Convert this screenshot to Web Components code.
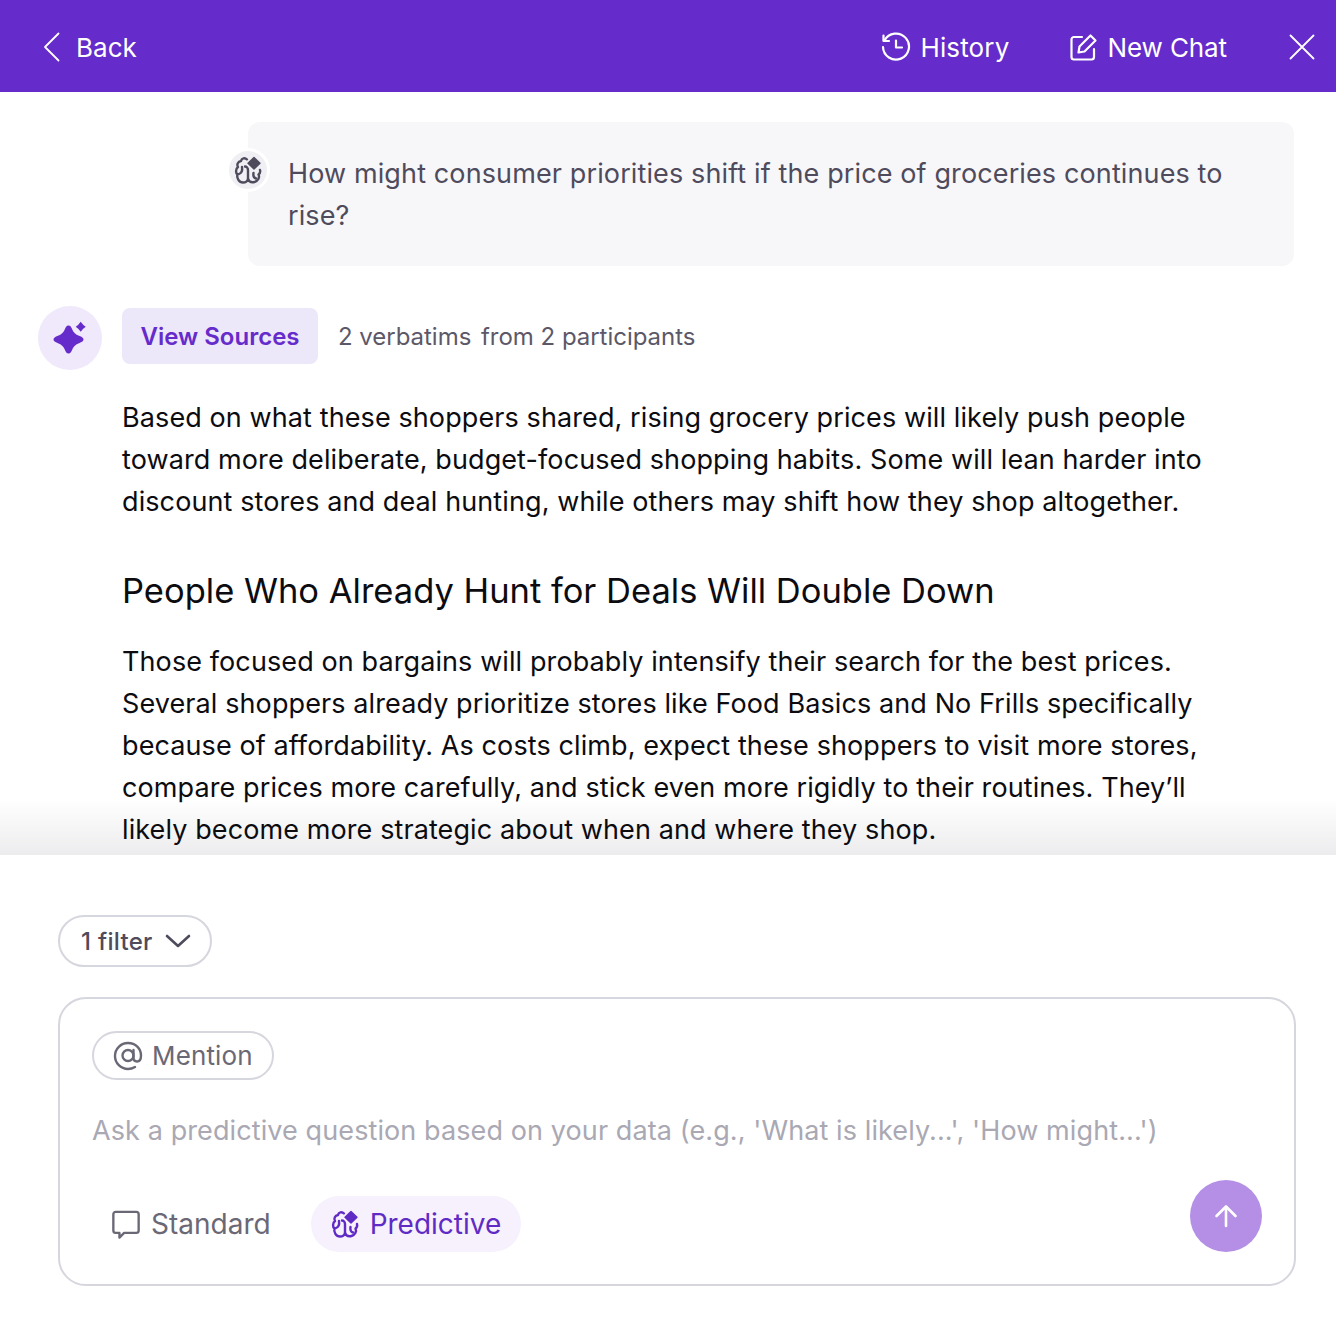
<!DOCTYPE html>
<html>
<head>
<meta charset="utf-8">
<title>Chat</title>
<style>
    html, body { margin: 0; padding: 0; background: #fff; }
    body { font-family: Inter, "Liberation Sans", sans-serif; }
</style>
</head>
<body>
<chat-panel>
    <top-bar slot="top"></top-bar>
    <user-bubble slot="thread">How might consumer priorities shift if the price of groceries continues to rise?</user-bubble>
    <answer-block slot="thread">
        <p>Based on what these shoppers shared, rising grocery prices will likely push people toward more deliberate, budget-focused shopping habits. Some will lean harder into discount stores and deal hunting, while others may shift how they shop altogether.</p>
        <h2>People Who Already Hunt for Deals Will Double Down</h2>
        <p>Those focused on bargains will probably intensify their search for the best prices. Several shoppers already prioritize stores like Food Basics and No Frills specifically because of affordability. As costs climb, expect these shoppers to visit more stores, compare prices more carefully, and stick even more rigidly to their routines. They’ll likely become more strategic about when and where they shop.</p>
    </answer-block>
    <chat-composer slot="bottom"></chat-composer>
</chat-panel>

<script>
class BrainIcon extends HTMLElement {
    connectedCallback() {
        const size = this.getAttribute('size') || 28;
        this.attachShadow({ mode: 'open' }).innerHTML = `
            <style>
                :host { display: inline-flex; flex: none; }
                svg { display: block; overflow: visible; }
            </style>
            <svg width="${size}" height="${size}" viewBox="0 0 28 28" fill="none" stroke="currentColor" stroke-width="2.400" stroke-linecap="round" stroke-linejoin="round">
                <mask id="cut" maskUnits="userSpaceOnUse" x="-2" y="-2" width="32" height="32">
                    <rect x="-2" y="-2" width="32" height="32" fill="#fff" stroke="none"/>
                    <path d="M20 -0.500L28 7.200L20 15L12 7.200Z" fill="#000" stroke="#000" stroke-width="1"/>
                </mask>
                <g mask="url(#cut)">
                    <path d="M13 3.500C11 1.500 7.500 2 7 5C4 5.500 2.500 8.500 4 11C1.500 13 1.500 17 3.500 18.500C2.500 22 5 26.500 9 26.500C11.500 26.500 13.500 25 14 23C15 25.500 17.500 26.800 20.500 26C24 25 26 21.500 24.500 18.500C26 17.500 26.500 16 26 14"/>
                    <path d="M14 23V14C14 12 12.500 10.500 11 10.500"/>
                    <path d="M8 11C8.500 14 7.500 17 5 18"/>
                    <path d="M19.500 17C19 20 20 22 22 22.500"/>
                </g>
                <path d="M20 1.500L26 7.200L20 13L14 7.200Z" fill="currentColor" stroke-width="1.400"/>
            </svg>`;
    }
}
customElements.define('brain-icon', BrainIcon);

class TopBar extends HTMLElement {
    connectedCallback() {
        this.attachShadow({ mode: 'open' }).innerHTML = `
            <style>
                :host {
                    display: flex;
                    align-items: center;
                    box-sizing: border-box;
                    height: 92px;
                    background: #662bcb;
                    color: #fff;
                    padding: 4px 20px 0 42px;
                    font-size: 26px;
                    line-height: 32px;
                    letter-spacing: 0.05px;
                }
                .item { display: flex; align-items: center; }
                .back { gap: 14px; margin-right: auto; }
                .history { gap: 9px; margin-right: 61px; letter-spacing: 0.15px; }
                .new { gap: 9px; margin-right: 61px; letter-spacing: -0.1px; }
                svg { display: block; flex: none; margin-top: -2px; }
            </style>
            <div class="item back">
                <svg width="20" height="30" viewBox="0 0 20 30" fill="none" stroke="#fff" stroke-width="1.800" stroke-linecap="round" stroke-linejoin="round"><path d="M16.500 1.500L3 15L16.500 28.500"/></svg>
                <span>Back</span>
            </div>
            <div class="item history">
                <svg width="30" height="30" viewBox="0 0 30 30" fill="none" stroke="#fff" stroke-width="2.200" stroke-linecap="round" stroke-linejoin="round"><path d="M3.500 8.500A13 13 0 1 1 2 15"/><path d="M2.500 3.500V9H8"/><path d="M15 8.500V15.500H21"/></svg>
                <span>History</span>
            </div>
            <div class="item new">
                <svg width="28" height="28" viewBox="0 0 28 28" fill="none" stroke="#fff" stroke-width="2.200" stroke-linecap="round" stroke-linejoin="round"><path d="M12 4H4A2.500 2.500 0 0 0 1.500 6.500V24A2.500 2.500 0 0 0 4 26.500H21.500A2.500 2.500 0 0 0 24 24V16"/><path d="M20.500 2.500L25.500 7.500L14.500 18.500L8.500 19.500L9.500 13.500Z"/></svg>
                <span>New Chat</span>
            </div>
            <svg width="28" height="28" viewBox="0 0 28 28" fill="none" stroke="#fff" stroke-width="1.800" stroke-linecap="round"><path d="M2.500 2.500L25.500 25.500M25.500 2.500L2.500 25.500"/></svg>`;
    }
}
customElements.define('top-bar', TopBar);

class UserBubble extends HTMLElement {
    connectedCallback() {
        this.attachShadow({ mode: 'open' }).innerHTML = `
            <style>
                :host {
                    display: block;
                    position: relative;
                    margin: 30px 42px 0 248px;
                    padding: 31px 60px 29px 40px;
                    background: #f7f7fa;
                    border-radius: 12px;
                    color: #4f4b5c;
                    font-size: 27px;
                    line-height: 42px;
                    letter-spacing: 0.12px;
                }
                .avatar {
                    position: absolute;
                    left: -22px;
                    top: 26px;
                    width: 38px;
                    height: 38px;
                    border: 3px solid #fff;
                    border-radius: 50%;
                    background: #f0f0f4;
                    display: flex;
                    align-items: center;
                    justify-content: center;
                }
            </style>
            <div class="avatar"><brain-icon size="28"></brain-icon></div>
            <slot></slot>`;
    }
}
customElements.define('user-bubble', UserBubble);

class AnswerBlock extends HTMLElement {
    connectedCallback() {
        this.attachShadow({ mode: 'open' }).innerHTML = `
            <style>
                :host {
                    display: block;
                    position: relative;
                    margin: 40px 42px 0 38px;
                }
                .head { display: flex; align-items: flex-start; gap: 20px; height: 64px; }
                .avatar {
                    width: 64px;
                    height: 64px;
                    border-radius: 50%;
                    background: #efe9fb;
                    display: flex;
                    align-items: center;
                    justify-content: center;
                }
                .btn {
                    box-sizing: border-box;
                    height: 56px;
                    margin-top: 2px;
                    padding: 1px 18.500px 0;
                    display: flex;
                    align-items: center;
                    background: #ede7fa;
                    color: #662bcb;
                    font-weight: 600;
                    font-size: 24px;
                    border-radius: 8px;
                }
                .count {
                    margin-top: 2px;
                    color: #5c5868;
                    font-size: 24px;
                    line-height: 58px;
                    letter-spacing: -0.03px;
                }
                .count span { margin-right: 3px; }
                .body { margin: 27px 60px 0 84px; color: #0c0c10; }
                ::slotted(p) {
                    margin: 0;
                    font-size: 27px;
                    line-height: 42px;
                    letter-spacing: 0.1px;
                }
                ::slotted(h2) {
                    margin: 44px 0 26px;
                    font-size: 34.500px;
                    line-height: 48px;
                    font-weight: 400;
                }
                svg { display: block; }
            </style>
            <div class="head">
                <div class="avatar">
                    <svg width="36" height="36" viewBox="0 0 36 36" fill="#662bcb"><path d="M16.500 5.500C18.600 5.500 19.400 7.500 20.500 10C21.500 12.500 23.600 14.500 27 15.800C30 16.900 31.500 18 31.500 19.500C31.500 21 30 22.100 27 23.200C23.600 24.500 21.500 26.500 20.500 29C19.400 31.500 18.600 33.500 16.500 33.500C14.400 33.500 13.600 31.500 12.500 29C11.500 26.500 9.400 24.500 6 23.200C3 22.100 1.500 21 1.500 19.500C1.500 18 3 16.900 6 15.800C9.400 14.500 11.500 12.500 12.500 10C13.600 7.500 14.400 5.500 16.500 5.500Z"/><path d="M28.700 1.700Q30.700 4.700 33.700 6.700Q30.700 8.700 28.700 11.700Q26.700 8.700 23.700 6.700Q26.700 4.700 28.700 1.700Z"/></svg>
                </div>
                <div class="btn">View Sources</div>
                <div class="count"><span>2 verbatims</span> from 2 participants</div>
            </div>
            <div class="body"><slot></slot></div>`;
    }
}
customElements.define('answer-block', AnswerBlock);

class ChatComposer extends HTMLElement {
    connectedCallback() {
        this.attachShadow({ mode: 'open' }).innerHTML = `
            <style>
                :host {
                    display: block;
                    padding: 60px 40px 50px 58px;
                    background: #fff;
                }
                .filter {
                    display: inline-flex;
                    align-items: center;
                    gap: 12px;
                    height: 48px;
                    padding: 0 19px 0 21px;
                    border: 2px solid #d6d6de;
                    border-radius: 26px;
                    color: #4f4b5c;
                    font-size: 24px;
                    font-weight: 500;
                    letter-spacing: 0.3px;
                }
                .box {
                    box-sizing: border-box;
                    height: 289px;
                    margin-top: 30px;
                    padding: 32px;
                    border: 2px solid #d6d6de;
                    border-radius: 28px;
                    display: flex;
                    flex-direction: column;
                }
                .mention {
                    align-self: flex-start;
                    display: flex;
                    align-items: center;
                    gap: 9px;
                    height: 45px;
                    padding: 0 19px;
                    border: 2px solid #d6d6de;
                    border-radius: 25px;
                    color: #6b6875;
                    font-size: 26px;
                    letter-spacing: 0.15px;
                }
                .placeholder {
                    margin-top: 31px;
                    color: #a9a8b3;
                    font-size: 27px;
                    line-height: 40px;
                    letter-spacing: 0.1px;
                    white-space: nowrap;
                }
                .modes { margin-top: auto; display: flex; align-items: center; gap: 20px; height: 56px; }
                .mode { display: flex; align-items: center; height: 56px; gap: 10px; border-radius: 28px; font-size: 28px; }
                .standard { color: #6b6875; padding: 0 20px 0 19px; }
                .predictive { color: #5f2bc4; background: #f6f1fd; padding: 0 20px; gap: 11px; }
                .send {
                    margin-left: auto;
                    width: 72px;
                    height: 72px;
                    margin-top: -16px;
                    border-radius: 50%;
                    background: #b58fe6;
                    display: flex;
                    align-items: center;
                    justify-content: center;
                }
                svg { display: block; flex: none; }
            </style>
            <div class="filter">
                <span>1 filter</span>
                <svg width="26" height="16" viewBox="0 0 26 16" fill="none" stroke="#4f4b5c" stroke-width="2.600" stroke-linecap="round" stroke-linejoin="round"><path d="M2 3L13 13L24 3"/></svg>
            </div>
            <div class="box">
                <div class="mention">
                    <svg width="30" height="30" viewBox="0 0 30 30" fill="none" stroke="#6b6875" stroke-width="2.400" stroke-linecap="round" stroke-linejoin="round"><circle cx="15" cy="14.500" r="5.500"/><path d="M20.500 9V16.500C20.500 19 22 20.500 24 20.500C26.500 20.500 28 18 28 14.500C28 7.500 22.500 2 15 2C7.800 2 2 7.800 2 15C2 22.200 7.800 28 15 28C17.600 28 20 27.200 22 26"/></svg>
                    <span>Mention</span>
                </div>
                <div class="placeholder">Ask a predictive question based on your data (e.g., 'What is likely...', 'How might...')</div>
                <div class="modes">
                    <div class="mode standard">
                        <svg width="30" height="30" viewBox="0 0 32 32" fill="none" stroke="#6b6875" stroke-width="2.500" stroke-linecap="round" stroke-linejoin="round"><path d="M5 3H27A2.500 2.500 0 0 1 29.500 5.500V23A2.500 2.500 0 0 1 27 25.500H14L9 30.500V25.500H5A2.500 2.500 0 0 1 2.500 23V5.500A2.500 2.500 0 0 1 5 3Z"/></svg>
                        <span>Standard</span>
                    </div>
                    <div class="mode predictive">
                        <brain-icon size="28"></brain-icon>
                        <span>Predictive</span>
                    </div>
                    <div class="send">
                        <svg width="26" height="26" viewBox="0 0 26 26" fill="none" stroke="#fff" stroke-width="2.600" stroke-linecap="round" stroke-linejoin="round"><path d="M13 23V4M3.500 13L13 3.500L22.500 13"/></svg>
                    </div>
                </div>
            </div>`;
    }
}
customElements.define('chat-composer', ChatComposer);

class ChatPanel extends HTMLElement {
    constructor() {
        super();
        this.attachShadow({ mode: 'open' }).innerHTML = `
            <style>
                :host {
                    display: flex;
                    flex-direction: column;
                    height: 1336px;
                    overflow: hidden;
                }
                .thread {
                    position: relative;
                    height: 763px;
                    flex: none;
                    overflow: hidden;
                }
                .fade {
                    position: absolute;
                    left: 0;
                    right: 0;
                    bottom: 0;
                    height: 56px;
                    background: linear-gradient(to bottom, #ffffff, #ececee);
                    pointer-events: none;
                }
            </style>
            <slot name="top"></slot>
            <div class="thread">
                <div class="fade"></div>
                <slot name="thread"></slot>
            </div>
            <slot name="bottom"></slot>`;
    }
}
customElements.define('chat-panel', ChatPanel);
</script>
</body>
</html>
